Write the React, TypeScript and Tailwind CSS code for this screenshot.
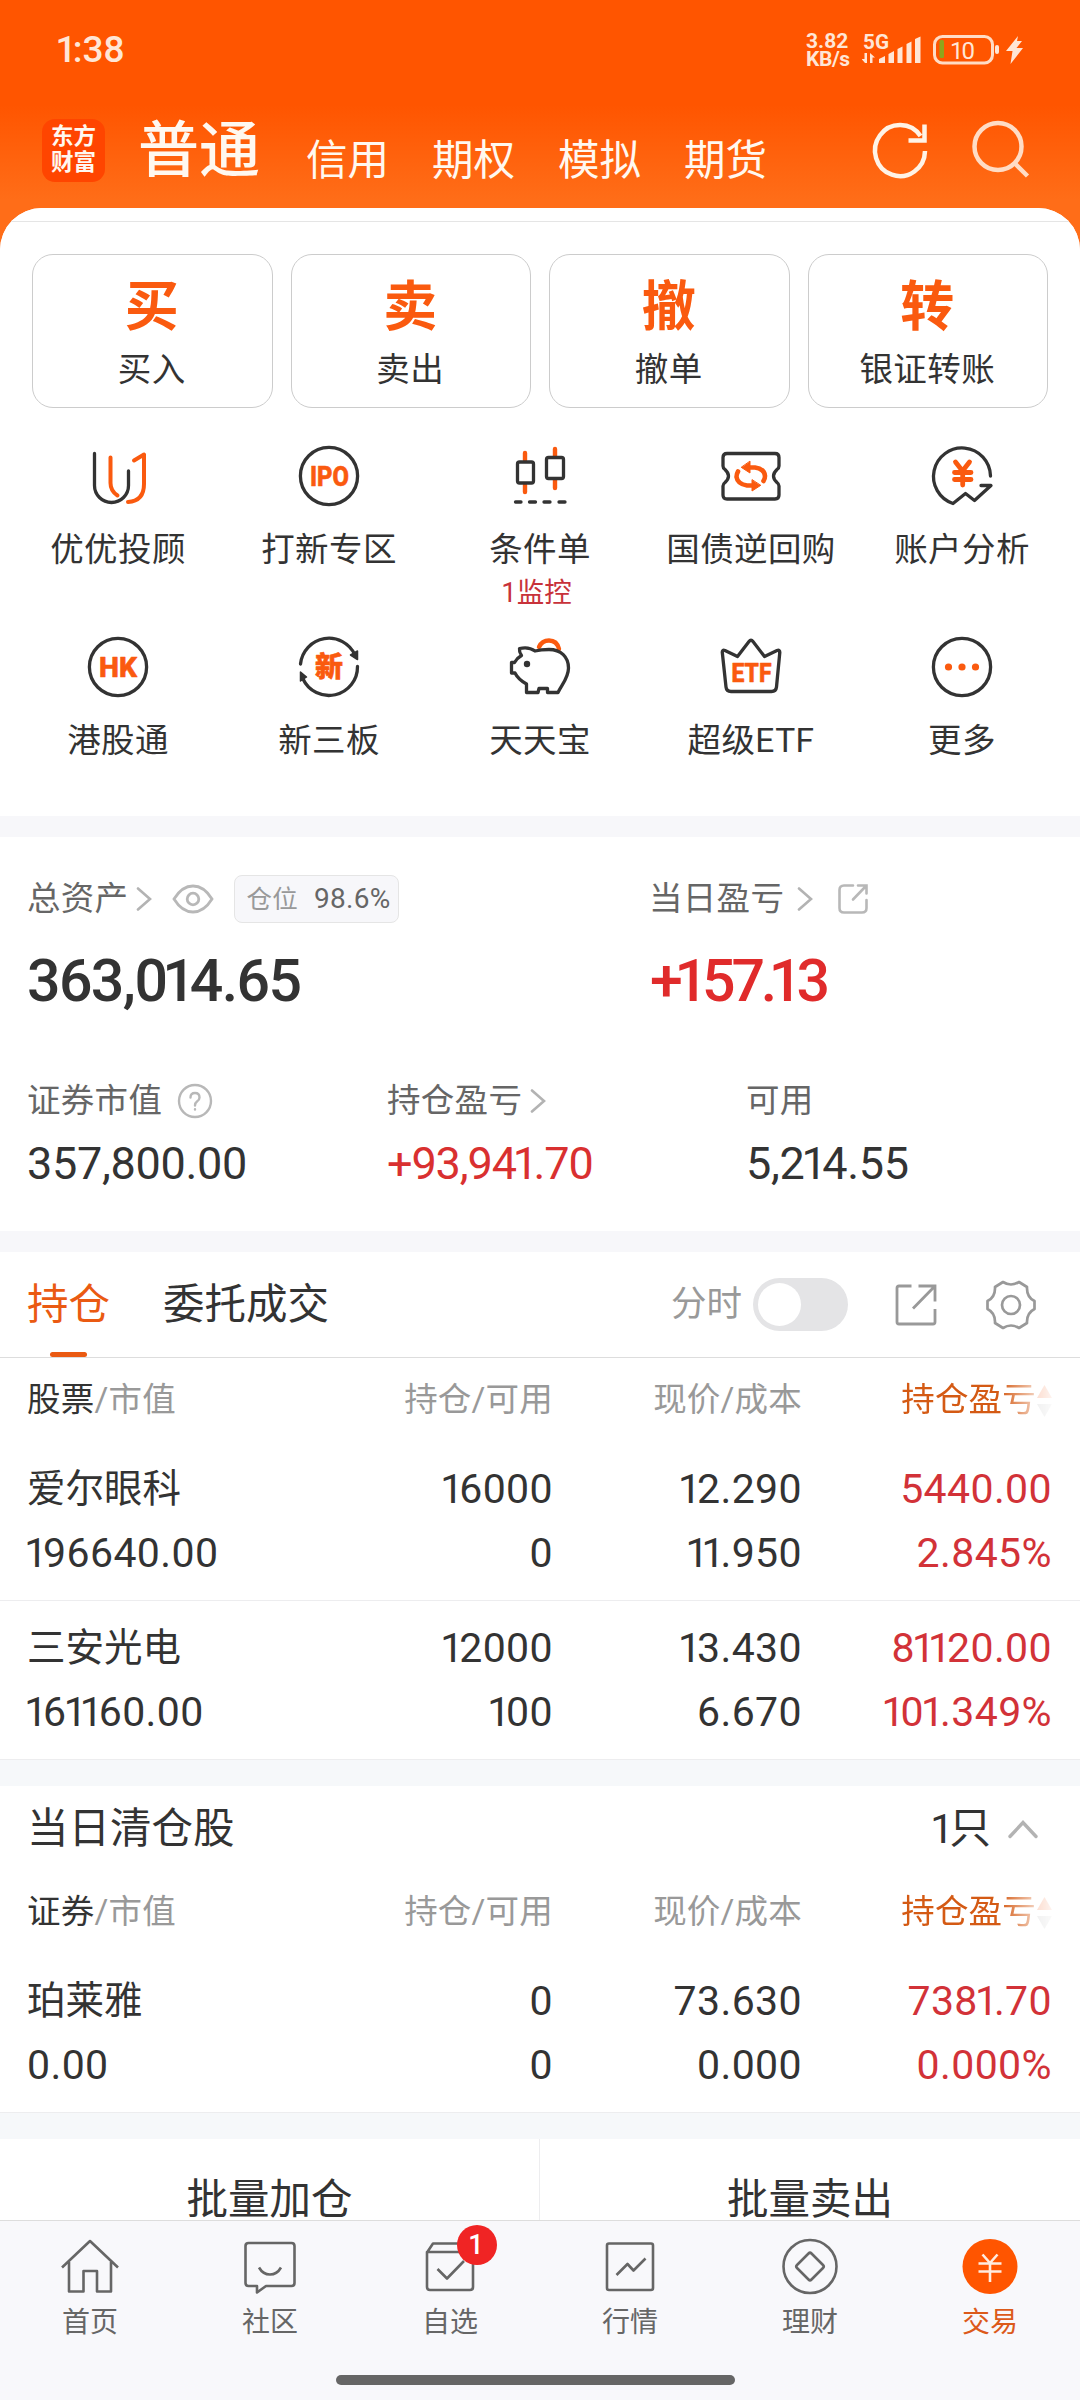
import React from 'react';
import { clsx } from 'clsx';

const INK = '#333333';
const ORANGE = '#fa5a0f';

interface Holding {
  name: string;
  value: string;
  amount: string;
  available: string;
  price: string;
  cost: string;
  profit: string;
  rate: string;
}

const holdings: Holding[] = [
  { name: '爱尔眼科', value: '196640.00', amount: '16000', available: '0', price: '12.290', cost: '11.950', profit: '5440.00', rate: '2.845%' },
  { name: '三安光电', value: '161160.00', amount: '12000', available: '100', price: '13.430', cost: '6.670', profit: '81120.00', rate: '101.349%' },
];

const cleared: Holding[] = [
  { name: '珀莱雅', value: '0.00', amount: '0', available: '0', price: '73.630', cost: '0.000', profit: '7381.70', rate: '0.000%' },
];

const actions = [
  { char: '买', label: '买入' },
  { char: '卖', label: '卖出' },
  { char: '撤', label: '撤单' },
  { char: '转', label: '银证转账' },
];

// Proportional figures: the digit 1 takes less room than the others
function Num({ children }: { children: string }) {
  return (
    <>
      {children.split(/(1)/).map((part, i) =>
        part === '1' ? (
          <span key={i} className="-ml-[0.07em] tracking-[-0.1em]">1</span>
        ) : (
          part
        )
      )}
    </>
  );
}

function IconBox({ children }: { children: React.ReactNode }) {
  return (
    <svg
      className="h-[64px] w-[64px]"
      viewBox="0 0 64 64"
      fill="none"
      stroke={INK}
      strokeWidth="3.3"
      strokeLinecap="round"
      strokeLinejoin="round"
    >
      {children}
    </svg>
  );
}

function IconText({ x, y, width, size, children }: { x: number; y: number; width: number; size: number; children: string }) {
  return (
    <text
      x={x}
      y={y}
      textLength={width}
      lengthAdjust="spacingAndGlyphs"
      fontSize={size}
      fontWeight="800"
      fill={ORANGE}
      stroke={ORANGE}
      strokeWidth="0.6"
    >
      {children}
    </text>
  );
}

const features = [
  {
    label: '优优投顾',
    icon: (
      <IconBox>
        <path d="M8.5 9.5V41.5a17 17 0 0 0 34 0V27" />
        <path stroke={ORANGE} strokeWidth="4" d="M24.5 13.5V39q0 8 7 12.5M48 16.5l10-6V40q0 17-16 18" />
      </IconBox>
    ),
  },
  {
    label: '打新专区',
    icon: (
      <IconBox>
        <circle cx="32" cy="32" r="28.6" />
        <IconText x={13} y={41.5} width={39} size={27}>IPO</IconText>
      </IconBox>
    ),
  },
  {
    label: '条件单',
    note: '1监控',
    icon: (
      <IconBox>
        <path stroke={ORANGE} strokeWidth="4.4" d="M17 9v7M17 41v7M47 5v7M47 36v8" />
        <rect x="9.5" y="18" width="16" height="21" rx="2" />
        <rect x="38.5" y="13.5" width="17" height="21" rx="2" />
        <path d="M7.5 58h5.5M21.5 58h6M36 58h6M51 58h6" />
      </IconBox>
    ),
  },
  {
    label: '国债逆回购',
    icon: (
      <IconBox>
        <path d="M8 9.5H56q4 0 4 4V22q0 2-2 3.5q-7 6.5 0 13q2 1.5 2 3.5V51q0 4-4 4H8q-4 0-4-4V42q0-2 2-3.5q7-6.5 0-13q-2-1.5-2-3.5V13.5q0-4 4-4Z" />
        <path stroke={ORANGE} strokeWidth="4.6" d="M29 23.5h7q9.5 1.5 10 8.5q0 3-1.5 5M35 41.5h-7q-9.5-1.5-10.5-8.5q0-3 1.5-5.5" />
        <path fill={ORANGE} stroke={ORANGE} strokeWidth="1" d="M31 17.5v11.5l-8.5-5.5zM33 36v11l8.5-5.5z" />
      </IconBox>
    ),
  },
  {
    label: '账户分析',
    icon: (
      <IconBox>
        <path d="M60.5 32A28.5 28.5 0 1 0 23 59.5L35.5 49.5L44.5 56.5L61 41.5H51" />
        <path stroke={ORANGE} strokeWidth="4.8" d="M25.5 18l7 9l7-9M24.5 28.5h16.5M24.5 35.5h16.5M32.7 27v14" />
      </IconBox>
    ),
  },
  {
    label: '港股通',
    icon: (
      <IconBox>
        <circle cx="32" cy="32" r="28.6" />
        <IconText x={13} y={41.5} width={38} size={27}>HK</IconText>
      </IconBox>
    ),
  },
  {
    label: '新三板',
    icon: (
      <IconBox>
        <path d="M3.5 29A28.6 28.6 0 0 1 58 20M60.5 31.5A28.6 28.6 0 0 1 6 44" />
        <path fill={INK} strokeWidth="1.5" d="M60.5 16v8.5l-7-4.5zM3.5 46v-9l6 5z" />
        <IconText x={18} y={42} width={28} size={28}>新</IconText>
      </IconBox>
    ),
  },
  {
    label: '天天宝',
    icon: (
      <IconBox>
        <path stroke={ORANGE} strokeWidth="4.4" d="M31 12q3-6.5 10-6.5q8 0 10 8.5" />
        <path d="M11.5 13.5C18 12 23 13 27 16q6-1.5 14-1.5C53 14.5 60.5 22 60.5 33C60.5 43 54 49 50 57.5H39.5V53.5H31L30 57.5H18.5V49C13 46 9 42 7 38H3.5V27.5H6.5Q9 23 13.5 20.5Q11 17 11.5 13.5Z" />
        <circle cx="19" cy="29" r="3.2" fill={INK} stroke="none" />
      </IconBox>
    ),
  },
  {
    label: '超级ETF',
    icon: (
      <IconBox>
        <path d="M6 15.5L18.5 21.5L30 6.5q2-2.5 4 0L45.5 21.5L58 15.5q3-1 2.8 2L57.5 52q-.5 4.5-5 4.5H12q-4.5 0-5-4.5L3.3 17.5q-.3-3 2.7-2Z" />
        <IconText x={12.5} y={46.5} width={40} size={26}>ETF</IconText>
      </IconBox>
    ),
  },
  {
    label: '更多',
    icon: (
      <IconBox>
        <circle cx="32" cy="32" r="28.6" />
        <g fill={ORANGE} stroke="none">
          <circle cx="18.5" cy="32" r="3.6" />
          <circle cx="32" cy="32" r="3.6" />
          <circle cx="45.5" cy="32" r="3.6" />
        </g>
      </IconBox>
    ),
  },
];

function Chevron({ className }: { className?: string }) {
  return (
    <svg className={clsx('h-[24px] w-[16px]', className)} viewBox="0 0 16 24" fill="none" stroke="#b3b3b3" strokeWidth="2.6" strokeLinecap="round">
      <path d="M2 1.5L14 12L2 22.5" />
    </svg>
  );
}

function StatusBar() {
  return (
    <div className="flex h-[100px] items-center pl-[58px] text-[#ffe6d6]">
      <span className="w-[748px] text-[37px] font-medium leading-[40px]">
        <Num>1:38</Num>
      </span>
      <div className="flex w-[56px] flex-col text-[21px] font-bold leading-[18.5px]">
        <span>3.82</span>
        <span className="tracking-[-0.4px]">KB/s</span>
      </div>
      <svg className="h-[34px] w-[170px]" viewBox="862 33 170 34" fill="#ffe6d6">
        <text x="863" y="48.5" fontSize="21" fontWeight="700" textLength="26" lengthAdjust="spacingAndGlyphs">5G</text>
        <path d="M867 53v10h-2l-3.5-4h3v-6zM870 63V53l5 4.5h-2.5V63zM879 59l6-3v7h-6zM888.5 54l5.5-3v12h-5.5zM897.5 49l5-2.5V63h-5zM906.5 44l5-2.5V63h-5zM915 39l5.5-2.5V63H915z" />
        <rect x="934.5" y="36.5" width="58" height="26.5" rx="8" fill="none" stroke="#ffdcc5" strokeWidth="3" />
        <rect x="939.5" y="40" width="4.5" height="18" rx="1.5" fill="#8fa51c" />
        <text x="950" y="58.5" fontSize="24" textLength="25">10</text>
        <rect x="995" y="45" width="4" height="9" rx="2" />
        <path d="M1018 36L1006 51h6.5l-2 13L1023 48h-6.5l5.5-7h-5z" />
      </svg>
    </div>
  );
}

function Header() {
  return (
    <header className="h-[208px] text-[#fff8f0]">
      <StatusBar />
      <div className="flex h-[100px] items-center pl-[42px]">
        <div className="flex h-[63px] w-[63px] flex-col items-center justify-center rounded-[13px] bg-[#ff4500] pb-[2px] text-[22.5px] font-bold leading-[26px]">
          <span>东方</span>
          <span>财富</span>
        </div>
        <span className="ml-[33px] w-[168px] pt-[2px] text-[61px] font-medium leading-[64px]">普通</span>
        <nav className="flex gap-[43px] pt-[21px] text-[41.5px] leading-[46px]">
          <span>信用</span>
          <span>期权</span>
          <span>模拟</span>
          <span>期货</span>
        </nav>
        <svg className="ml-[101px] h-[64px] w-[170px]" viewBox="868 118 170 64" fill="none" stroke="#fff3e6" strokeWidth="4.5">
          <path d="M925 151A25 25.5 0 1 1 920.5 136M908.5 140.5H924.5V124.5" />
          <g stroke="#ffdcc5">
            <circle cx="998" cy="146.5" r="23.5" />
            <path d="M1015 163.5L1027.5 176" />
          </g>
        </svg>
      </div>
    </header>
  );
}

function QuickActions() {
  return (
    <div className="grid grid-cols-4 gap-[18px] px-[32px] pt-[32px]">
      {actions.map((a) => (
        <div key={a.label} className="flex h-[154px] flex-col items-center rounded-[21px] border border-[#cccccc] pr-[1px] pt-[22px]">
          <span className="text-[54px] font-bold leading-[62px] text-[#fa5a0f]">{a.char}</span>
          <span className="mt-[11px] text-[33.5px] leading-[40px] tracking-[0.4px] text-[#333333]">{a.label}</span>
        </div>
      ))}
    </div>
  );
}

function FeatureGrid() {
  return (
    <div className="grid grid-cols-5 grid-rows-[191px_181px] pl-[12px] pr-[13px] pt-[36px]">
      {features.map((f) => (
        <div key={f.label} className="flex flex-col items-center">
          {f.icon}
          <span className="mt-[22px] pl-[1px] text-[33.5px] leading-[40px] tracking-[0.4px] text-[#333333]">{f.label}</span>
          {f.note && (
            <span className="mr-[6px] mt-[8px] text-[27.5px] leading-[30px] text-[#c8323a]">{f.note}</span>
          )}
        </div>
      ))}
    </div>
  );
}

function Assets() {
  return (
    <section className="h-[394px] bg-white pl-[27px] pr-[28px]">
      <div className="flex h-[124px] items-center text-[33.5px] tracking-[0.3px] text-[#666666]">
        <div className="flex w-[622px] items-center">
          <span>总资产</span>
          <Chevron className="ml-[8px]" />
          <svg className="ml-[20px] h-[30px] w-[42px]" viewBox="0 0 42 30" fill="none" stroke="#b8b8b8" strokeWidth="2.8">
            <path d="M2 15Q10 2 21 2T40 15Q32 28 21 28T2 15Z" />
            <circle cx="21" cy="15" r="5.8" />
          </svg>
          <div className="ml-[20px] flex h-[48px] w-[165px] items-center rounded-[8px] border border-[#e5e5e5] bg-[#f7f7fa] pl-[11px]">
            <span className="text-[25.5px] text-[#999999]">仓位</span>
            <span className="ml-[16px] text-[28px]">98.6%</span>
          </div>
        </div>
        <span>当日盈亏</span>
        <Chevron className="ml-[13px]" />
        <svg className="ml-[24px] h-[32px] w-[32px]" viewBox="0 0 32 32" fill="none" stroke="#b8b8b8" strokeWidth="2.6" strokeLinecap="round">
          <path d="M16 2.5H7q-4.5 0-4.5 4.5V25q0 4.5 4.5 4.5H25q4.5 0 4.5-4.5V17M21 2.5H29.5V10.5M29 3L16 16.5" />
        </svg>
      </div>
      <div className="flex h-[40px] items-center text-[59px] font-medium">
        <span className="w-[623px] tracking-[-1.6px] text-[#333333]">
          <Num>363,014.65</Num>
        </span>
        <span className="tracking-[-4.2px] text-[#e02b2b]">
          <Num>+157.13</Num>
        </span>
      </div>
      <div className="mt-[80px] flex h-[40px] items-center text-[33.5px] tracking-[0.3px] text-[#666666]">
        <div className="flex w-[360px] items-center">
          <span>证券市值</span>
          <svg className="ml-[15px] h-[36px] w-[36px]" viewBox="0 0 36 36" fill="none" stroke="#b8b8b8" strokeWidth="2.4">
            <circle cx="18" cy="18" r="16" />
            <path strokeLinecap="round" d="M13.5 14.5q0-4.5 4.5-4.5t4.5 4.5q0 2.5-2.5 4q-2 1.5-2 4M18 26.3v.2" />
          </svg>
        </div>
        <div className="flex w-[359px] items-center">
          <span>持仓盈亏</span>
          <Chevron className="ml-[8px]" />
        </div>
        <span>可用</span>
      </div>
      <div className="mt-[23px] flex h-[40px] items-center text-[45px] tracking-[-0.3px] text-[#333333]">
        <span className="w-[360px]">357,800.00</span>
        <span className="w-[359px] tracking-[-1.1px] text-[#d93030]">
          <Num>+93,941.70</Num>
        </span>
        <span>
          <Num>5,214.55</Num>
        </span>
      </div>
    </section>
  );
}

function Tabs() {
  return (
    <div className="flex h-[106px] items-center border-b border-[#dddddd] px-[27px] text-[41.5px]">
      <div className="relative flex h-full items-center pt-[2px] text-[#ea5a12]">
        持仓
        <div className="absolute bottom-0 left-[23px] h-[5px] w-[37px] rounded-full bg-[#ea5a12]" />
      </div>
      <span className="ml-[53px] w-[508px] pt-[2px] text-[#333333]">委托成交</span>
      <span className="pt-[1px] text-[35.5px] text-[#999999]">分时</span>
      <div className="ml-[11px] flex h-[53px] w-[95px] items-center rounded-full bg-[#e4e4e6] pl-[5px]">
        <div className="h-[43px] w-[43px] rounded-full bg-white" />
      </div>
      <svg className="ml-[46px] h-[44px] w-[44px]" viewBox="0 0 44 44" fill="none" stroke="#999999" strokeWidth="2.8">
        <path d="M17.5 3H5q-2 0-2 2V39q0 2 2 2H39q2 0 2-2V26M24.5 3H41V18.5M40.5 3.5L19 25.5" />
      </svg>
      <svg className="ml-[48px] h-[50px] w-[50px]" viewBox="0 0 50 50" fill="none" stroke="#999999" strokeWidth="2.7" strokeLinejoin="round">
        <circle cx="25" cy="25" r="9" />
        <path d="M17 2Q25 7 33 2L41 7Q40.5 17 48.5 21V29Q40.5 33 41 43L33 48Q25 43 17 48L9 43Q9.5 33 1.5 29V21Q9.5 17 9 7Z" />
      </svg>
    </div>
  );
}

function TableHead({ first }: { first: string }) {
  return (
    <div className="grid h-[84px] grid-cols-[276px_250px_249px_250px] items-center pl-[27px] pt-[1px] text-right text-[33.5px] tracking-[0.2px] text-[#999999]">
      <div className="text-left">
        <span className="text-[#333333]">{first}</span>/市值
      </div>
      <span>持仓/可用</span>
      <span>现价/成本</span>
      <div className="flex items-center justify-end text-[#d45a14] [mask-image:linear-gradient(to_right,black_79%,rgba(0,0,0,0.3)_93%,rgba(0,0,0,0.1)_100%)]">
        持仓盈亏
        <svg className="ml-[1px] h-[32px] w-[15px]" viewBox="0 0 15 32">
          <path d="M7.5 0L15 13H0z" fill="#f58a5c" />
          <path d="M7.5 32L15 19H0z" fill="#cccccc" />
        </svg>
      </div>
    </div>
  );
}

function HoldingRow({ item }: { item: Holding }) {
  return (
    <div className="grid h-[159px] grid-cols-[276px_250px_249px_250px] content-start border-b border-[#ededef] pl-[27px] pt-[15px] text-right text-[41px] leading-[64px] tracking-[0.4px] text-[#333333]">
      <span className="text-left text-[38.5px] tracking-normal">{item.name}</span>
      <span><Num>{item.amount}</Num></span>
      <span><Num>{item.price}</Num></span>
      <span className="text-[#d23238]"><Num>{item.profit}</Num></span>
      <span className="text-left"><Num>{item.value}</Num></span>
      <span><Num>{item.available}</Num></span>
      <span><Num>{item.cost}</Num></span>
      <span className="text-[#d23238]"><Num>{item.rate}</Num></span>
    </div>
  );
}

const navItems = [
  {
    label: '首页',
    icon: <path d="M2 29.5L30 3L58 29.5M9 24V53.5H23.5V33H37V53.5H51V24" />,
  },
  {
    label: '社区',
    icon: <path d="M8.5 5H51.5q3 0 3 3V45q0 3-3 3H26L17 54.5V48H8.5q-3 0-3-3V8q0-3 3-3ZM19 29.5q4 7 11 7t11-7" />,
  },
  {
    label: '自选',
    badge: '1',
    icon: <path d="M7 14.5L13 5.5H47L53 14.5M7 14H53V49q0 3-3 3H10q-3 0-3-3ZM17.5 31L27 40.5L44 23" />,
  },
  {
    label: '行情',
    icon: <path d="M9 5.5H51q2 0 2 2V50q0 2-2 2H9q-2 0-2-2V7.5q0-2 2-2ZM16.5 37L27.5 26L33.5 32.5L45.5 20.5" />,
  },
  {
    label: '理财',
    icon: (
      <>
        <circle cx="30" cy="28.5" r="26.5" />
        <path d="M28.5 15.5q1.5-1.5 3 0L43 27q1.5 1.5 0 3L31.5 41.5q-1.5 1.5-3 0L17 30q-1.5-1.5 0-3Z" />
      </>
    ),
  },
  {
    label: '交易',
    active: true,
    icon: (
      <>
        <circle cx="30" cy="28.5" r="27.5" fill="#ff5500" stroke="none" />
        <path stroke="#ffece0" d="M22.5 16.5L30 25L37.5 16.5M18.5 25.5H41.5M18.5 33.5H41.5M30 25V44" />
      </>
    ),
  },
];

function BottomNav() {
  return (
    <footer className="h-[180px] border-t border-[#dddddd] bg-[#f8f8fb]">
      <div className="grid h-[154px] grid-cols-6 pt-[17px]">
        {navItems.map((n) => (
          <div key={n.label} className={clsx('relative flex flex-col items-center', n.active ? 'text-[#dc5a1a]' : 'text-[#666666]')}>
            <svg className="h-[60px] w-[60px]" viewBox="0 0 60 60" fill="none" stroke="#666666" strokeWidth="2.6" strokeLinejoin="round">
              {n.icon}
            </svg>
            <span className="mt-[8px] text-[28px] leading-[34px]">{n.label}</span>
            {n.badge && (
              <div className="absolute left-[97px] top-[-13px] flex h-[40px] w-[40px] items-center justify-center rounded-full bg-[#f02424] pr-[2px] text-[27px] font-medium text-white">
                {n.badge}
              </div>
            )}
          </div>
        ))}
      </div>
      <div className="ml-[336px] h-[10px] w-[399px] rounded-full bg-[#666666]" />
    </footer>
  );
}

export default function App() {
  return (
    <div className="h-[2400px] w-[1080px] overflow-hidden bg-[linear-gradient(to_bottom,#ff5500_0px,#ff5500_105px,#ff6d18_200px,#ff6d18_260px)] font-[Roboto,'Noto_Sans_CJK_SC',sans-serif]">
      <Header />
      <main className="h-[2012px] overflow-hidden rounded-t-[42px] bg-[#f7f7fa]">
        <section className="h-[608px] bg-white">
          <div className="h-[14px] border-b border-[#e5e5e5]" />
          <QuickActions />
          <FeatureGrid />
        </section>
        <div className="h-[21px]" />
        <Assets />
        <div className="h-[21px]" />
        <section className="bg-white">
          <Tabs />
          <TableHead first="股票" />
          {holdings.map((h) => (
            <HoldingRow key={h.name} item={h} />
          ))}
        </section>
        <div className="h-[26px] bg-[#f6f8fa]" />
        <section className="bg-white">
          <div className="flex h-[84px] items-center justify-between pl-[27px] pr-[42px] pt-[2px] text-[41.5px] text-[#333333]">
            <span>当日清仓股</span>
            <div className="flex items-center">
              <span>
                <Num>1只</Num>
              </span>
              <svg className="ml-[17px] h-[20px] w-[30px]" viewBox="0 0 30 20" fill="none" stroke="#b3b3b3" strokeWidth="3.4" strokeLinecap="round">
                <path d="M2 17.5L15 3.5L28 17.5" />
              </svg>
            </div>
          </div>
          <TableHead first="证券" />
          {cleared.map((h) => (
            <HoldingRow key={h.name} item={h} />
          ))}
        </section>
        <div className="h-[26px] bg-[#f6f8fa]" />
        <div className="grid h-[81px] grid-cols-2 bg-white text-center text-[41.5px] leading-[46px] text-[#333333]">
          <div className="h-[81px] border-r border-[#ededef] pt-[38px]">批量加仓</div>
          <div className="pt-[38px]">批量卖出</div>
        </div>
      </main>
      <BottomNav />
    </div>
  );
}
